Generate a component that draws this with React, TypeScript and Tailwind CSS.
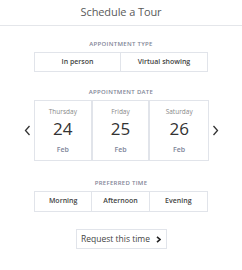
const font = { fontFamily: '"Open Sans", "Liberation Sans", sans-serif' };

function Chevron({ dir }: { dir: 'left' | 'right' }) {
  return (
    <svg width="7" height="11" viewBox="0 0 7 11" fill="none">
      <path
        d={dir === 'left' ? 'M5.5 1 L1.5 5.5 L5.5 10' : 'M1.5 1 L5.5 5.5 L1.5 10'}
        stroke="#333"
        strokeWidth="1.3"
      />
    </svg>
  );
}

const days = [
  { name: 'Thursday', num: '24' },
  { name: 'Friday', num: '25' },
  { name: 'Saturday', num: '26' },
];

export default function App() {
  return (
    <div className="w-[242px] h-[270px] bg-white text-[#333]" style={font}>
      {/* Header */}
      <div className="h-[26px] flex items-center justify-center border-b border-[#e4e6ea]">
        <span className="text-[11px] tracking-[-0.1px] text-[#5a5a5a]">Schedule a Tour</span>
      </div>

      {/* Appointment type */}
      <div className="mt-[14px] text-center text-[6px] leading-[8px] tracking-[0.3px] text-[#7f8596] font-semibold">
        APPOINTMENT TYPE
      </div>
      <div className="mt-[4px] mx-[34px] h-[20px] grid grid-cols-2 border border-[#e1e4ea] text-[7px] font-semibold text-[#444]">
        <div className="flex items-center justify-center border-r border-[#e1e4ea]">In person</div>
        <div className="flex items-center justify-center">Virtual showing</div>
      </div>

      {/* Appointment date */}
      <div className="mt-[16px] text-center text-[6px] leading-[8px] tracking-[0.3px] text-[#7f8596] font-semibold">
        APPOINTMENT DATE
      </div>
      <div className="mt-[4px] flex items-center">
        <div className="w-[34px] flex justify-end pr-[3px]">
          <Chevron dir="left" />
        </div>
        <div className="w-[175px] h-[61px] grid grid-cols-3 border border-[#e1e4ea]">
          {days.map((d, i) => (
            <div
              key={d.name}
              className={`flex flex-col items-center ${i < 2 ? 'border-r-2 border-[#e1e4ea]' : ''}`}
            >
              <div className="mt-[7px] text-[6.5px] leading-[8px] text-[#888]">{d.name}</div>
              <div className="mt-[2px] text-[17px] leading-[21px] text-[#333]">{d.num}</div>
              <div className="mt-[6px] text-[7px] leading-[9px] text-[#7c8398] font-semibold">Feb</div>
            </div>
          ))}
        </div>
        <div className="w-[33px] flex justify-start pl-[3px]">
          <Chevron dir="right" />
        </div>
      </div>

      {/* Preferred time */}
      <div className="mt-[18px] text-center text-[6px] leading-[8px] tracking-[0.3px] text-[#7f8596] font-semibold">
        PREFERRED TIME
      </div>
      <div className="mt-[4px] mx-[34px] h-[21px] grid grid-cols-3 border border-[#e1e4ea] text-[7px] font-semibold text-[#444]">
        <div className="flex items-center justify-center border-r border-[#e1e4ea]">Morning</div>
        <div className="flex items-center justify-center border-r border-[#e1e4ea]">Afternoon</div>
        <div className="flex items-center justify-center">Evening</div>
      </div>

      {/* Request */}
      <div className="mt-[17px] flex justify-center">
        <button className="w-[91px] h-[20px] flex items-center justify-center gap-[6px] border border-[#e1e4ea] text-[8.5px] text-[#444]">
          <span>Request this time</span>
          <svg width="5" height="7" viewBox="0 0 5 7" fill="none">
            <path d="M1 0.8 L4 3.5 L1 6.2" stroke="#222" strokeWidth="1.6" />
          </svg>
        </button>
      </div>
    </div>
  );
}
